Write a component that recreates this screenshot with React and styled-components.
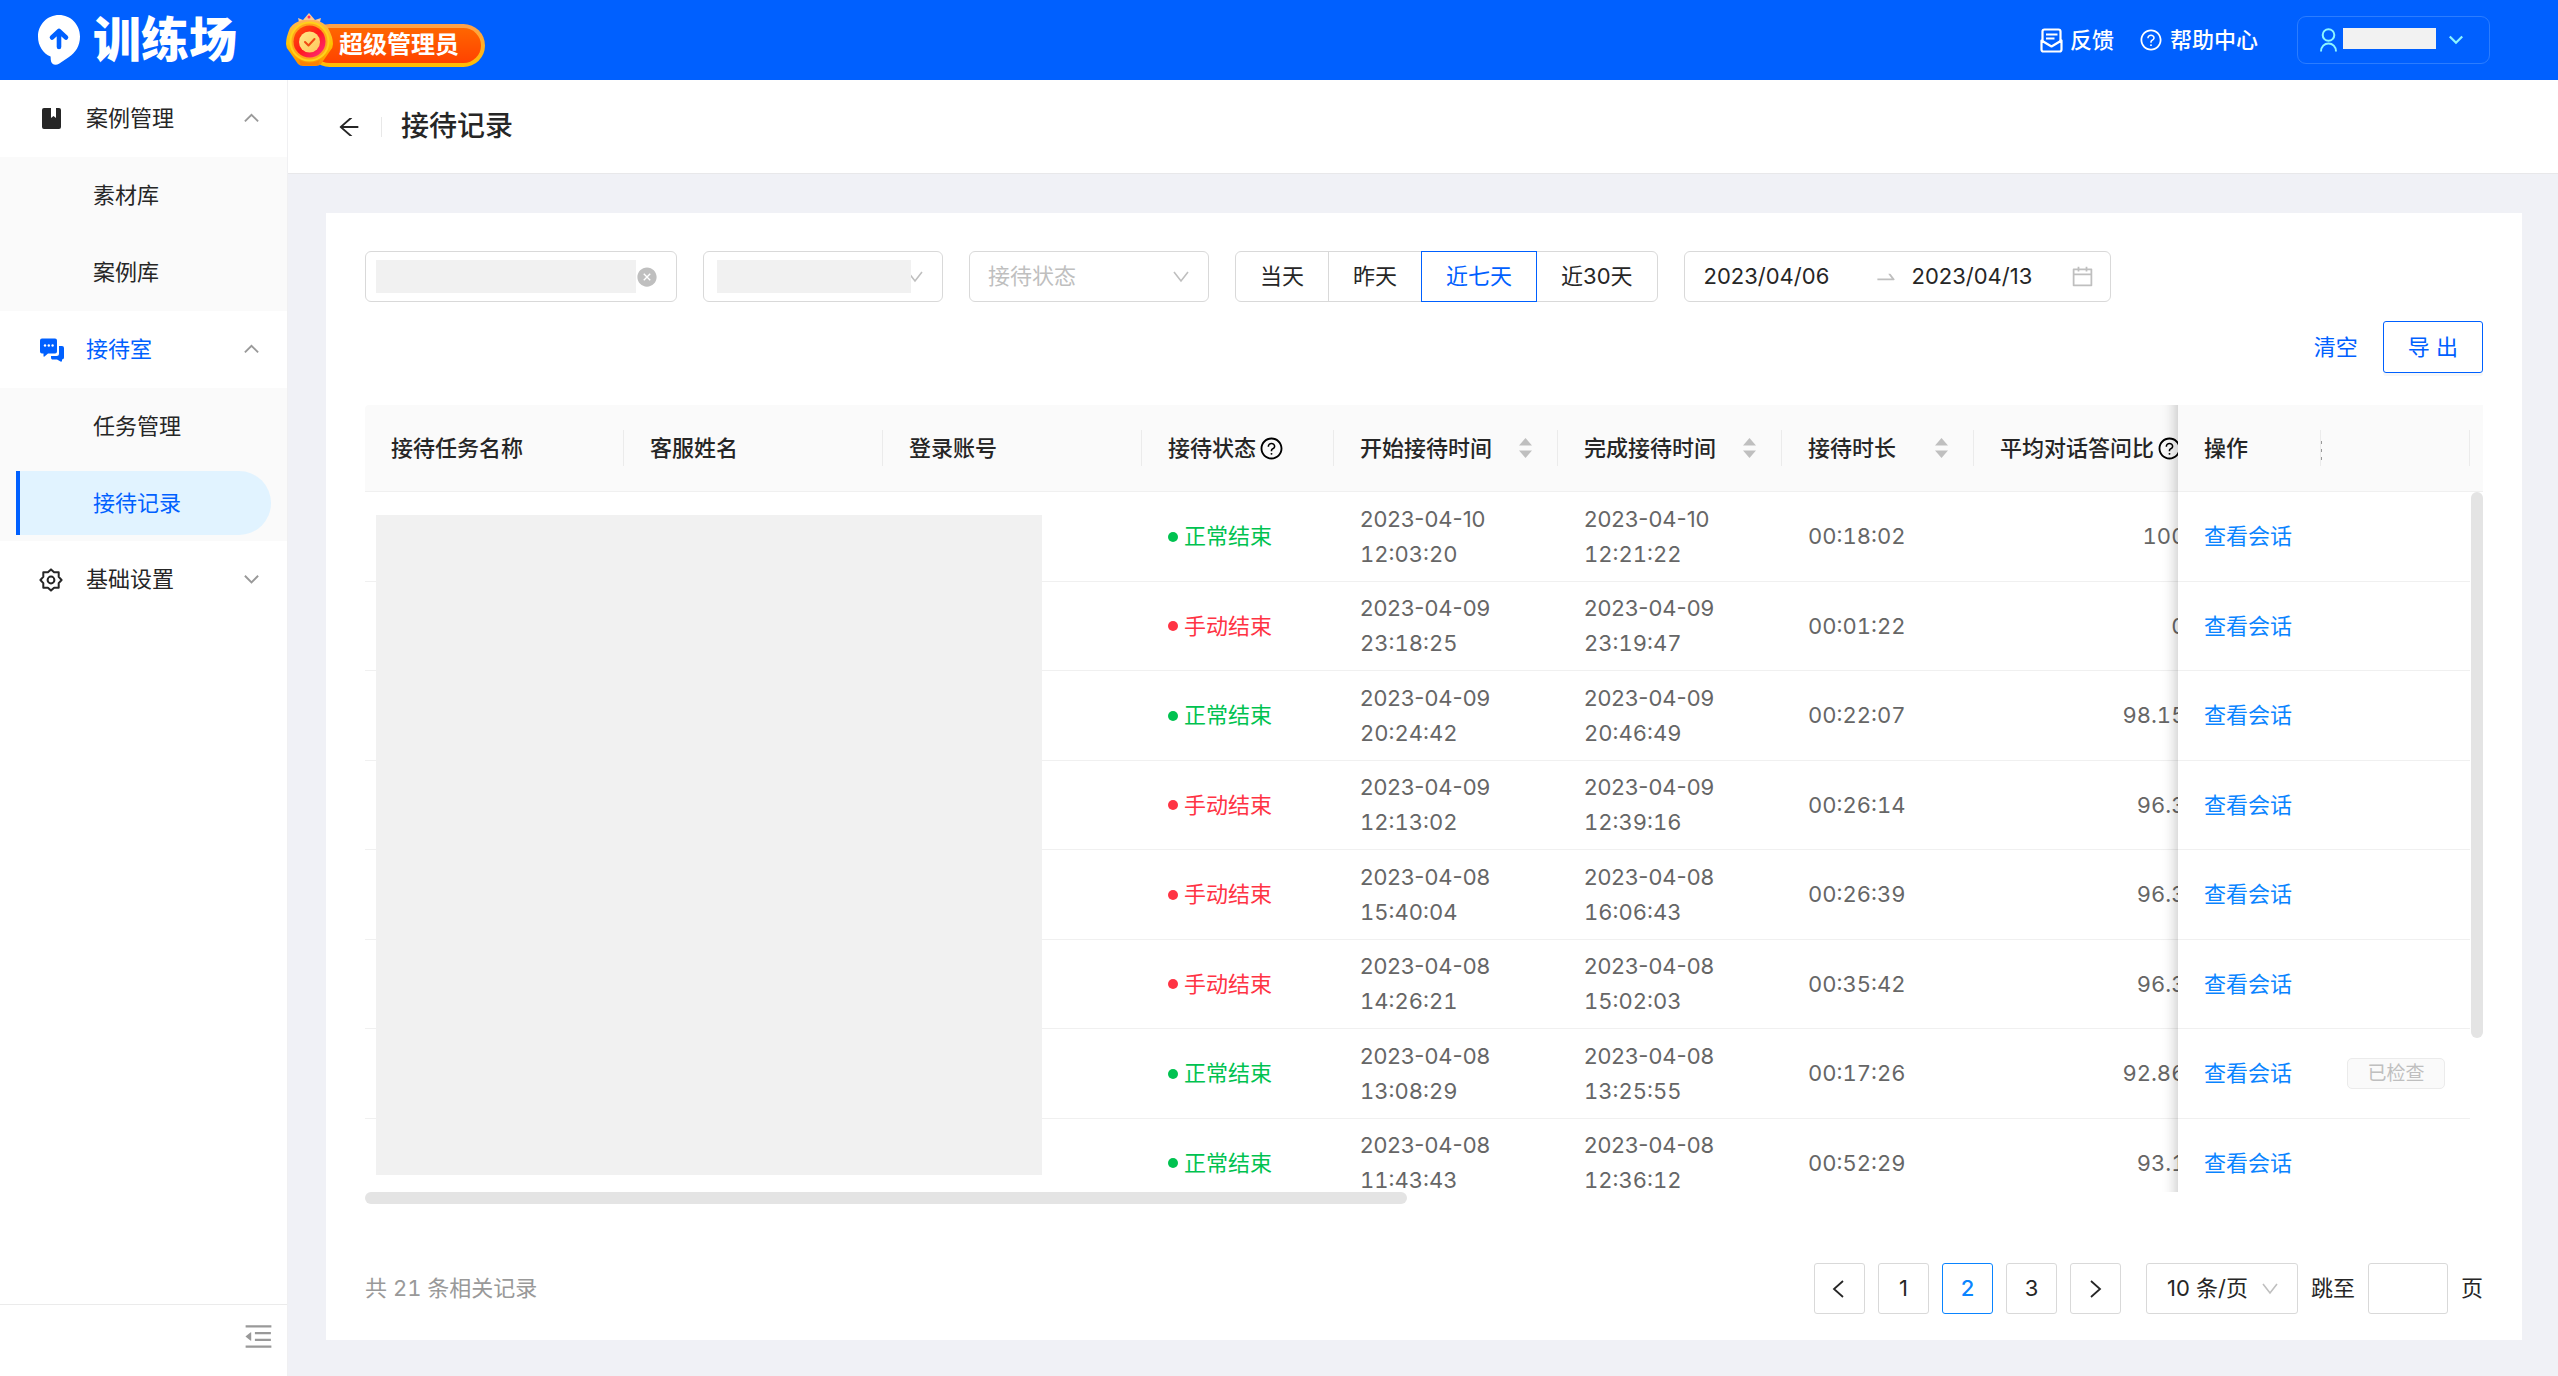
import React from "react";
import styled, { createGlobalStyle, css } from "styled-components";
import {
  AiOutlineArrowLeft,
  AiOutlineQuestionCircle,
  AiFillCloseCircle,
  AiOutlineSwapRight,
  AiOutlineCalendar,
  AiOutlineMenuFold,
} from "react-icons/ai";

const GlobalStyle = createGlobalStyle`
  * {
    box-sizing: border-box;
  }
  body {
    margin: 0;
    background: #f0f1f6;
  }
  body, button, input, select {
    font-family: Inter, "Noto Sans CJK SC", sans-serif;
    font-size: 22px;
    line-height: 35px;
    color: #262626;
  }
  svg {
    display: block;
    flex-shrink: 0;
  }
`;

const Page = styled.div`
  display: flex;
  flex-direction: column;
  height: 100vh;
`;

// top bar
const TopBar = styled.header`
  display: flex;
  align-items: center;
  flex-shrink: 0;
  height: 80px;
  padding: 0 68px 0 38px;
  background: #0060ff;
`;
const Brand = styled.a`
  display: flex;
  align-items: center;
  gap: 13px;
  margin-right: 49px;
  color: #fff;
  font-size: 48px;
  font-weight: 900;
  line-height: 48px;
  text-decoration: none;
`;
const RoleBadge = styled.div`
  display: flex;
  align-items: flex-end;
`;
const Medal = styled.svg`
  position: relative;
  z-index: 1;
`;
const RoleName = styled.span`
  height: 43px;
  margin-left: -26px;
  padding: 0 22px 0 27px;
  border: 4px solid transparent;
  border-radius: 22px;
  background:
    linear-gradient(#ff6600, #ff4200) padding-box,
    linear-gradient(#ffa04a, #ffbe00) border-box;
  color: #fff;
  font-size: 24px;
  font-weight: 700;
  line-height: 34px;
`;
const TopActions = styled.nav`
  display: flex;
  align-items: center;
  gap: 25px;
  margin-left: auto;
`;
const TopLink = styled.a`
  display: flex;
  align-items: center;
  gap: 7px;
  color: #fff;
  font-weight: 500;
  text-decoration: none;
`;
const UserButton = styled.button`
  display: flex;
  align-items: center;
  height: 48px;
  margin-left: 14px;
  padding: 0 25px 0 22px;
  border: 1px solid #2b7dff;
  border-radius: 9px;
  background: transparent;
  color: #8cf5ff;
`;
const UserMask = styled.span`
  width: 93px;
  height: 21px;
  margin: 0 12px 4px 6px;
  background: #f2f2f2;
`;

// side menu
const Body = styled.div`
  display: flex;
  flex: 1;
  min-height: 0;
`;
const Sidebar = styled.aside`
  display: flex;
  flex-direction: column;
  flex-shrink: 0;
  width: 288px;
  border-right: 1px solid #f0f0f2;
  background: #fff;
`;
const Menu = styled.nav`
  flex: 1;
`;
const GroupTitle = styled.button`
  display: flex;
  align-items: center;
  width: 100%;
  height: 77px;
  padding: 0 27px 0 39px;
  border: none;
  background: #fff;
  color: ${(p) => (p.$active ? "#0060ff" : "#262626")};
  text-align: left;
`;
const GroupIcon = styled.span`
  width: 47px;
`;
const GroupLabel = styled.span`
  flex: 1;
`;
const MenuArrow = styled.span`
  color: #999;
`;
const SubMenu = styled.div`
  background: #fafafa;
`;
const SubItem = styled.a`
  display: flex;
  align-items: center;
  height: 77px;
  padding-left: 93px;
  color: #262626;
  text-decoration: none;

  ${(p) =>
    p.$active &&
    css`
      height: 64px;
      margin: 0 16px;
      padding-left: 73px;
      border-left: 4px solid #0060ff;
      border-radius: 0 32px 32px 0;
      background: #e1f3ff;
      color: #0060ff;
    `}
`;
const SubItemRow = styled.div`
  display: flex;
  flex-direction: column;
  justify-content: center;
  height: 76px;
`;
const SidebarFooter = styled.div`
  display: flex;
  justify-content: flex-end;
  align-items: flex-start;
  height: 72px;
  padding: 15px 12px;
  border-top: 1px solid #ebebeb;
`;
const IconButton = styled.button`
  display: flex;
  padding: 0;
  border: none;
  background: none;
  color: ${(p) => p.$color || "#262626"};
`;

// content
const Main = styled.main`
  display: flex;
  flex: 1;
  flex-direction: column;
  min-width: 0;
`;
const PageHeader = styled.div`
  display: flex;
  align-items: center;
  flex-shrink: 0;
  height: 94px;
  padding: 0 48px;
  border-bottom: 1px solid #e8e8ea;
  background: #fff;
`;
const Divider = styled.span`
  width: 1px;
  height: 20px;
  margin: 0 19px;
  background: #e8e8e8;
`;
const PageTitle = styled.h1`
  margin: 0;
  font-size: 28px;
  font-weight: 500;
`;
const Card = styled.section`
  display: flex;
  flex: 1;
  flex-direction: column;
  min-height: 0;
  margin: 39px 36px 36px 38px;
  padding: 38px 39px 26px;
  background: #fff;
`;

// filters
const Filters = styled.form`
  display: flex;
  flex-wrap: wrap;
  gap: 26px;
`;
const Field = styled.div`
  position: relative;
  display: flex;
  align-items: center;
  width: ${(p) => p.$width}px;
  height: 51px;
  border: 1px solid #d9d9d9;
  border-radius: ${(p) => p.$radius || 6}px;
  background: #fff;
`;
const TextInput = styled.input`
  width: 100%;
  height: 100%;
  padding: 0 17px;
  border: none;
  outline: none;
  background: transparent;
`;
const Select = styled.select`
  width: 100%;
  height: 100%;
  padding: 0 18px;
  border: none;
  outline: none;
  appearance: none;
  background: transparent;
  color: ${(p) => (p.$placeholder ? "#bfbfbf" : "#262626")};
`;
const FieldMask = styled.span`
  position: absolute;
  top: 8px;
  bottom: 8px;
  left: ${(p) => p.$left}px;
  right: ${(p) => p.$right}px;
  background: #f1f1f1;
`;
const FieldIcon = styled.span`
  position: absolute;
  right: 18px;
  color: #bfbfbf;
  pointer-events: none;
`;
const RadioGroup = styled.div`
  display: flex;
`;
const RadioButton = styled.label`
  position: relative;
  display: flex;
  align-items: center;
  height: 51px;
  margin-left: -1px;
  padding: 0 24px;
  border: 1px solid #d9d9d9;

  &:first-child {
    margin-left: 0;
    border-radius: 6px 0 0 6px;
  }
  &:last-child {
    border-radius: 0 6px 6px 0;
  }
  &:has(input:checked) {
    z-index: 1;
    border-color: #0060ff;
    color: #0060ff;
  }
  input {
    position: absolute;
    opacity: 0;
  }
`;
const DateInput = styled.input`
  width: ${(p) => p.$width}px;
  padding: 0;
  border: none;
  outline: none;
  background: transparent;
`;
const DateRange = styled(Field)`
  padding: 0 14px 0 19px;
  color: #bfbfbf;
`;
const DateArrow = styled.span`
  margin-right: 14px;
`;
const Actions = styled.div`
  display: flex;
  justify-content: flex-end;
  gap: 25px;
  margin: 19px 0 32px;
`;
const LinkButton = styled.button`
  padding: 0;
  border: none;
  background: none;
  color: #0060ff;
`;
const ExportButton = styled.button`
  height: 52px;
  padding: 0 24px;
  border: 1px solid #0060ff;
  border-radius: 3px;
  background: #fff;
  box-shadow: 0 3px 0 rgba(0, 0, 0, 0.03);
  color: #0060ff;
`;

// table
const TableFrame = styled.div`
  position: relative;
  display: flex;
  flex: 1;
  flex-direction: column;
  min-height: 0;
`;
const Scroller = styled.div`
  flex: 1;
  min-height: 0;
  overflow: hidden;
`;
const Table = styled.table`
  width: 4260px;
  border-collapse: separate;
  border-spacing: 0;
  table-layout: fixed;
`;
const Col = styled.col`
  width: ${(p) => p.$width}px;
`;
const stuck = css`
  position: sticky;
  right: ${(p) => p.$right}px;
  z-index: 1;
`;
const edgeShadow = css`
  &::before {
    content: "";
    position: absolute;
    top: 0;
    bottom: -1px;
    left: -26px;
    width: 26px;
    box-shadow: inset -16px 0 13px -13px rgba(0, 0, 0, 0.2);
  }
`;
const HeadCell = styled.th`
  position: relative;
  height: 87px;
  padding: 0 26px;
  border-bottom: 1px solid #f0f0f0;
  background: #fafafa;
  font-weight: 500;
  text-align: left;
  white-space: nowrap;

  &:first-child {
    border-top-left-radius: 4px;
  }
  &::after {
    content: "";
    position: absolute;
    top: 25px;
    right: 0;
    width: 1px;
    height: 36px;
    background: ${(p) => (p.$plain ? "transparent" : "#ebebeb")};
  }
  ${(p) => p.$right !== undefined && stuck}
  ${(p) => p.$edge && edgeShadow}
`;
// grip of the column that is scrolled behind the fixed one
const Grip = styled.span`
  position: absolute;
  top: 36px;
  left: 0;
  width: 1px;
  height: 19px;
  background: repeating-linear-gradient(#999 0 3px, transparent 3px 8px);
`;
const HeadContent = styled.div`
  display: flex;
  align-items: center;
  justify-content: ${(p) => (p.$spread ? "space-between" : "flex-start")};
  gap: 3px;
`;
const Row = styled.tr`
  height: 90px;

  &:nth-child(even) {
    height: 89px;
  }
`;
const Cell = styled.td`
  padding: 0 26px;
  border-bottom: 1px solid ${(p) => (p.$plain ? "transparent" : "#f0f0f0")};
  background: #fff;
  color: #666;
  font-variant-numeric: tabular-nums;
  text-align: ${(p) => p.$align || "left"};
  ${(p) => p.$right !== undefined && stuck}
  ${(p) => p.$edge && edgeShadow}
`;
const Day = styled.div`
  font-variant-numeric: normal;
`;
const Status = styled.span`
  display: flex;
  align-items: center;
  gap: 6px;
  color: ${(p) => (p.$done ? "#00c250" : "#ff3344")};

  &::before {
    content: "";
    width: 10px;
    height: 10px;
    border-radius: 50%;
    background: currentColor;
  }
`;
const ViewLink = styled.a`
  color: #0a84ff;
  text-decoration: none;
`;
const CheckedButton = styled.button`
  display: block;
  width: 98px;
  height: 31px;
  padding: 0;
  border: 1px solid #ebebeb;
  border-radius: 5px;
  background: #fafafa;
  color: #bfbfbf;
  font-size: 19px;
  line-height: 28px;
`;
const DataMask = styled.div`
  position: absolute;
  top: 110px;
  bottom: 29px;
  left: 11px;
  width: 666px;
  background: #f1f1f1;
`;
const HorizontalThumb = styled.div`
  width: 49.2%;
  height: 12px;
  border-radius: 6px;
  background: #e4e4e4;
`;
const VerticalThumb = styled.div`
  position: absolute;
  z-index: 2;
  top: 87px;
  right: 0;
  width: 12px;
  height: 546px;
  border-radius: 6px;
  background: #e4e4e4;
`;

// pagination
const Footer = styled.div`
  display: flex;
  align-items: center;
  justify-content: space-between;
  margin-top: 59px;
`;
const Total = styled.span`
  color: #999;
  font-variant-numeric: tabular-nums;
`;
const Pager = styled.nav`
  display: flex;
  align-items: center;
  gap: 13px;
`;
const PageButton = styled.button`
  display: flex;
  align-items: center;
  justify-content: center;
  width: 51px;
  height: 51px;
  padding: 0;
  border: 1px solid ${(p) => (p.$active ? "#0a84ff" : "#d9d9d9")};
  border-radius: 3px;
  background: #fff;
  color: ${(p) => (p.$active ? "#0a84ff" : "#262626")};
  font-weight: ${(p) => (p.$active ? 500 : 400)};
`;
const PageSize = styled(Field)`
  margin-left: 12px;

  select {
    padding-left: 20px;
  }
`;
const JumpLabel = styled.label`
  display: flex;
  align-items: center;
  gap: 13px;
`;

const arrows = {
  up: "2,12 9,5 16,12",
  down: "2,5 9,12 16,5",
  select: "2,4 9,13 16,4",
  left: "13,1 4,9 13,17",
  right: "5,1 14,9 5,17",
};

const Chevron = ({ dir = "down", size = 18, stroke = 2 }) => (
  <svg width={size} height={size} viewBox="0 0 18 18" aria-hidden="true">
    <polyline points={arrows[dir]} fill="none" stroke="currentColor" strokeWidth={stroke} />
  </svg>
);

const SelectArrow = () => (
  <FieldIcon>
    <Chevron dir="select" stroke={1.6} />
  </FieldIcon>
);

const LogoIcon = () => (
  <svg width="42" height="50" viewBox="0 0 42 50" aria-hidden="true">
    <path
      d="M21 0C32.6 0 42 9.4 42 21.5C42 31 37.5 37.5 31 42L21 48.8C17 51.2 13 49 12.8 45L12.6 41.5C5 38.5 0 30.8 0 21.5C0 9.4 9.4 0 21 0Z"
      fill="#fff"
    />
    <path
      d="M21 32V16.500M14 22.500L21 16L28 22.500"
      fill="none"
      stroke="#0060ff"
      strokeWidth="4.6"
      strokeLinecap="round"
      strokeLinejoin="round"
    />
  </svg>
);

const MedalIcon = () => (
  <Medal width="48" height="54" viewBox="0 0 48 54" aria-hidden="true">
    <defs>
      <linearGradient id="gold" x1="0" y1="0" x2="0" y2="1">
        <stop offset="0" stopColor="#ffb45a" />
        <stop offset="0.5" stopColor="#ffc400" />
        <stop offset="1" stopColor="#ff8a00" />
      </linearGradient>
      <linearGradient id="ring" x1="0" y1="0" x2="1" y2="1">
        <stop offset="0" stopColor="#ff5a00" />
        <stop offset="0.5" stopColor="#ff1a1a" />
        <stop offset="1" stopColor="#ff2a8c" />
      </linearGradient>
      <linearGradient id="core" x1="0" y1="0" x2="1" y2="1">
        <stop offset="0" stopColor="#ffe98a" />
        <stop offset="1" stopColor="#ffc55a" />
      </linearGradient>
    </defs>
    <path d="M12 5L17 7L23 0L29 7L35 5L33 13H14Z" fill="#ffc890" />
    <circle cx="23" cy="4" r="1.5" fill="#ff2a6c" />
    <path
      d="M17 7H29Q38 9 42 15Q47 24 47 31Q47 35 44 38L35 51Q33 53 30 53H17Q14 53 12 51L3 38Q0 35 0 31Q0 24 4 15Q8 9 17 7Z"
      fill="url(#gold)"
    />
    <path d="M13 47Q23 53 34 47L32 52H15Z" fill="#ff7a00" opacity="0.7" />
    <circle cx="23.5" cy="28.5" r="20" fill="#ffd21a" />
    <circle cx="23.5" cy="28.5" r="18" fill="#ffa51a" />
    <circle cx="23.5" cy="28.5" r="16" fill="url(#ring)" />
    <circle cx="23.5" cy="29" r="10.5" fill="url(#core)" />
    <path
      d="M19 29L22.5 32.5L28.5 26"
      fill="none"
      stroke="#f04a14"
      strokeWidth="2"
      strokeLinecap="round"
      strokeLinejoin="round"
    />
  </Medal>
);

const FeedbackIcon = () => (
  <svg width="23" height="25" viewBox="0 0 23 25" aria-hidden="true">
    <g fill="none" stroke="#fff" strokeWidth="2.2" strokeLinejoin="round">
      <path d="M2.5 13V3.5Q2.5 1.5 4.5 1.5H18.5Q20.5 1.5 20.5 3.5V13" />
      <path d="M1.5 12.5L11.5 18.5L21.5 12.5V21.5Q21.5 23.5 19.5 23.5H3.5Q1.5 23.5 1.5 21.5Z" />
      <path d="M6 6.5H17.500M6 10.500H14.5" />
    </g>
  </svg>
);

const UserIcon = () => (
  <svg width="17" height="24" viewBox="0 0 17 24" aria-hidden="true">
    <g fill="none" stroke="currentColor" strokeWidth="2">
      <circle cx="8.5" cy="7" r="5.8" />
      <path d="M1 23.5C1 18.5 4.5 15.5 8.5 15.5S16 18.5 16 23.5" />
    </g>
  </svg>
);

const BookIcon = () => (
  <svg width="24" height="24" viewBox="0 0 24 24" aria-hidden="true">
    <path
      d="M5 1H12V11L14.5 9L17 11V1H20Q22 1 22 3V20Q22 22 20 22H5Q3 22 3 20V3Q3 1 5 1Z"
      fill="currentColor"
    />
  </svg>
);

const ChatIcon = () => (
  <svg width="25" height="24" viewBox="0 0 25 24" aria-hidden="true">
    <path
      d="M3 0.5H16Q18 0.5 18 2.5V13.5Q18 15.5 16 15.5H9L5.5 18.5Q4.5 19 4.5 18V15.5H3Q1 15.5 1 13.5V2.5Q1 0.5 3 0.5Z"
      fill="currentColor"
    />
    <path
      d="M20 8H23Q25 8 25 10V19.5Q25 21.5 23 21.5V23Q22.5 24 21.5 23.5L18 21.5H13Q12 21 12 19.5V18H17.5Q20 18 20 15.5Z"
      fill="currentColor"
    />
    <g fill="#fff">
      <circle cx="6" cy="7.5" r="1.2" />
      <circle cx="9.8" cy="7.5" r="1.2" />
      <circle cx="13.6" cy="7.5" r="1.2" />
    </g>
  </svg>
);

const GearIcon = () => (
  <svg width="24" height="24" viewBox="0 0 24 24" aria-hidden="true">
    <g fill="none" stroke="currentColor" strokeWidth="2">
      <path
        d="M12 1.4L15.1 4.3H19.7V8.9L22.6 12L19.7 15.1V19.7H15.1L12 22.6L8.9 19.7H4.3V15.1L1.4 12L4.3 8.9V4.3H8.9Z"
        strokeLinejoin="round"
      />
      <circle cx="12" cy="12" r="3.4" />
    </g>
  </svg>
);

const SortIcon = () => (
  <svg width="13" height="20" viewBox="0 0 13 20" fill="#bfbfbf" aria-hidden="true">
    <path d="M6.5 0L13 7.5H0Z" />
    <path d="M6.5 20L0 12.5H13Z" />
  </svg>
);

const records = [
  { done: true, start: ["2023-04-10", "12:03:20"], end: ["2023-04-10", "12:21:22"], time: "00:18:02", ratio: "100%" },
  { done: false, start: ["2023-04-09", "23:18:25"], end: ["2023-04-09", "23:19:47"], time: "00:01:22", ratio: "0%" },
  { done: true, start: ["2023-04-09", "20:24:42"], end: ["2023-04-09", "20:46:49"], time: "00:22:07", ratio: "98.15%" },
  { done: false, start: ["2023-04-09", "12:13:02"], end: ["2023-04-09", "12:39:16"], time: "00:26:14", ratio: "96.3%" },
  { done: false, start: ["2023-04-08", "15:40:04"], end: ["2023-04-08", "16:06:43"], time: "00:26:39", ratio: "96.3%" },
  { done: false, start: ["2023-04-08", "14:26:21"], end: ["2023-04-08", "15:02:03"], time: "00:35:42", ratio: "96.3%" },
  { done: true, start: ["2023-04-08", "13:08:29"], end: ["2023-04-08", "13:25:55"], time: "00:17:26", ratio: "92.86%", checked: true },
  { done: true, start: ["2023-04-08", "11:43:43"], end: ["2023-04-08", "12:36:12"], time: "00:52:29", ratio: "93.1%" },
];

const Header = () => (
  <TopBar>
    <Brand href="#">
      <LogoIcon />
      训练场
    </Brand>
    <RoleBadge>
      <MedalIcon />
      <RoleName>超级管理员</RoleName>
    </RoleBadge>
    <TopActions>
      <TopLink href="#">
        <FeedbackIcon />
        反馈
      </TopLink>
      <TopLink href="#">
        <AiOutlineQuestionCircle size={24} />
        帮助中心
      </TopLink>
      <UserButton type="button" aria-label="user">
        <UserIcon />
        <UserMask />
        <Chevron size={16} stroke={2.5} />
      </UserButton>
    </TopActions>
  </TopBar>
);

const MenuGroup = ({ icon, label, active, dir }) => (
  <GroupTitle type="button" $active={active}>
    <GroupIcon>{icon}</GroupIcon>
    <GroupLabel>{label}</GroupLabel>
    <MenuArrow>
      <Chevron dir={dir} size={17} />
    </MenuArrow>
  </GroupTitle>
);

const SideMenu = () => (
  <Sidebar>
    <Menu>
      <MenuGroup icon={<BookIcon />} label="案例管理" dir="up" />
      <SubMenu>
        <SubItem href="#">素材库</SubItem>
        <SubItem href="#">案例库</SubItem>
      </SubMenu>
      <MenuGroup icon={<ChatIcon />} label="接待室" dir="up" active />
      <SubMenu>
        <SubItem href="#">任务管理</SubItem>
        <SubItemRow>
          <SubItem href="#" $active aria-current="page">接待记录</SubItem>
        </SubItemRow>
      </SubMenu>
      <MenuGroup icon={<GearIcon />} label="基础设置" dir="down" />
    </Menu>
    <SidebarFooter>
      <IconButton type="button" aria-label="fold" $color="#999">
        <AiOutlineMenuFold size={33} />
      </IconButton>
    </SidebarFooter>
  </Sidebar>
);

const FilterBar = () => (
  <Filters>
    <Field $width={312}>
      <TextInput aria-label="name" />
      <FieldMask $left={10} $right={40} />
      <FieldIcon><AiFillCloseCircle size={22} /></FieldIcon>
    </Field>
    <Field $width={240}>
      <Select aria-label="task" defaultValue="">
        <option value=""></option>
      </Select>
      <SelectArrow />
      <FieldMask $left={13} $right={31} />
    </Field>
    <Field $width={240}>
      <Select aria-label="status" $placeholder defaultValue="">
        <option value="">接待状态</option>
      </Select>
      <SelectArrow />
    </Field>
    <RadioGroup>
      {["当天", "昨天", "近七天", "近30天"].map((label) => (
        <RadioButton key={label}>
          <input type="radio" name="range" defaultChecked={label === "近七天"} />
          {label}
        </RadioButton>
      ))}
    </RadioGroup>
    <DateRange $width={427}>
      <DateInput $width={170} aria-label="start date" defaultValue="2023/04/06" />
      <DateArrow><AiOutlineSwapRight size={24} /></DateArrow>
      <DateInput $width={158} aria-label="end date" defaultValue="2023/04/13" />
      <AiOutlineCalendar size={25} />
    </DateRange>
  </Filters>
);

const RecordTable = () => (
  <TableFrame>
    <Scroller>
      <Table>
        <colgroup>
          <Col $width={259} />
          <Col $width={259} />
          <Col $width={259} />
          <Col $width={192} />
          <Col $width={224} />
          <Col $width={224} />
          <Col $width={192} />
          <Col $width={259} />
          <col />
          <Col $width={143} />
          <Col $width={149} />
          <Col $width={13} />
        </colgroup>
        <thead>
          <tr>
            <HeadCell>接待任务名称</HeadCell>
            <HeadCell>客服姓名</HeadCell>
            <HeadCell>登录账号</HeadCell>
            <HeadCell>
              <HeadContent>接待状态<AiOutlineQuestionCircle size={25} color="#000" /></HeadContent>
            </HeadCell>
            <HeadCell>
              <HeadContent $spread>开始接待时间<SortIcon /></HeadContent>
            </HeadCell>
            <HeadCell>
              <HeadContent $spread>完成接待时间<SortIcon /></HeadContent>
            </HeadCell>
            <HeadCell>
              <HeadContent $spread>接待时长<SortIcon /></HeadContent>
            </HeadCell>
            <HeadCell>
              <HeadContent>平均对话答问比<AiOutlineQuestionCircle size={25} color="#000" /></HeadContent>
            </HeadCell>
            <HeadCell $plain />
            <HeadCell $right={162} $edge>操作</HeadCell>
            <HeadCell $right={13}><Grip /></HeadCell>
            <HeadCell $right={0} $plain />
          </tr>
        </thead>
        <tbody>
          {records.map((r) => (
            <Row key={r.start.join(" ")}>
              <Cell />
              <Cell />
              <Cell />
              <Cell><Status $done={r.done}>{r.done ? "正常结束" : "手动结束"}</Status></Cell>
              <Cell><Day>{r.start[0]}</Day>{r.start[1]}</Cell>
              <Cell><Day>{r.end[0]}</Day>{r.end[1]}</Cell>
              <Cell>{r.time}</Cell>
              <Cell $align="right">{r.ratio}</Cell>
              <Cell />
              <Cell $right={162} $edge><ViewLink href="#">查看会话</ViewLink></Cell>
              <Cell $right={13}>
                {r.checked && <CheckedButton type="button" disabled>已检查</CheckedButton>}
              </Cell>
              <Cell $right={0} $plain />
            </Row>
          ))}
        </tbody>
      </Table>
    </Scroller>
    <HorizontalThumb />
    <VerticalThumb />
    <DataMask />
  </TableFrame>
);

const Pagination = () => (
  <Footer>
    <Total>共 21 条相关记录</Total>
    <Pager>
      <PageButton type="button" aria-label="prev"><Chevron dir="left" stroke={1.8} /></PageButton>
      {[1, 2, 3].map((n) => (
        <PageButton type="button" key={n} $active={n === 2}>{n}</PageButton>
      ))}
      <PageButton type="button" aria-label="next"><Chevron dir="right" stroke={1.8} /></PageButton>
      <PageSize $width={152} $radius={3}>
        <Select aria-label="page size" defaultValue="10">
          <option value="10">10 条/页</option>
        </Select>
        <SelectArrow />
      </PageSize>
      <JumpLabel>
        跳至
        <Field $width={80} $radius={3}>
          <TextInput />
        </Field>
        页
      </JumpLabel>
    </Pager>
  </Footer>
);

const App = () => (
  <>
    <GlobalStyle />
    <Page>
      <Header />
      <Body>
        <SideMenu />
        <Main>
          <PageHeader>
            <IconButton type="button" aria-label="back">
              <AiOutlineArrowLeft size={26} />
            </IconButton>
            <Divider />
            <PageTitle>接待记录</PageTitle>
          </PageHeader>
          <Card>
            <FilterBar />
            <Actions>
              <LinkButton type="button">清空</LinkButton>
              <ExportButton type="button">导 出</ExportButton>
            </Actions>
            <RecordTable />
            <Pagination />
          </Card>
        </Main>
      </Body>
    </Page>
  </>
);

export default App;
